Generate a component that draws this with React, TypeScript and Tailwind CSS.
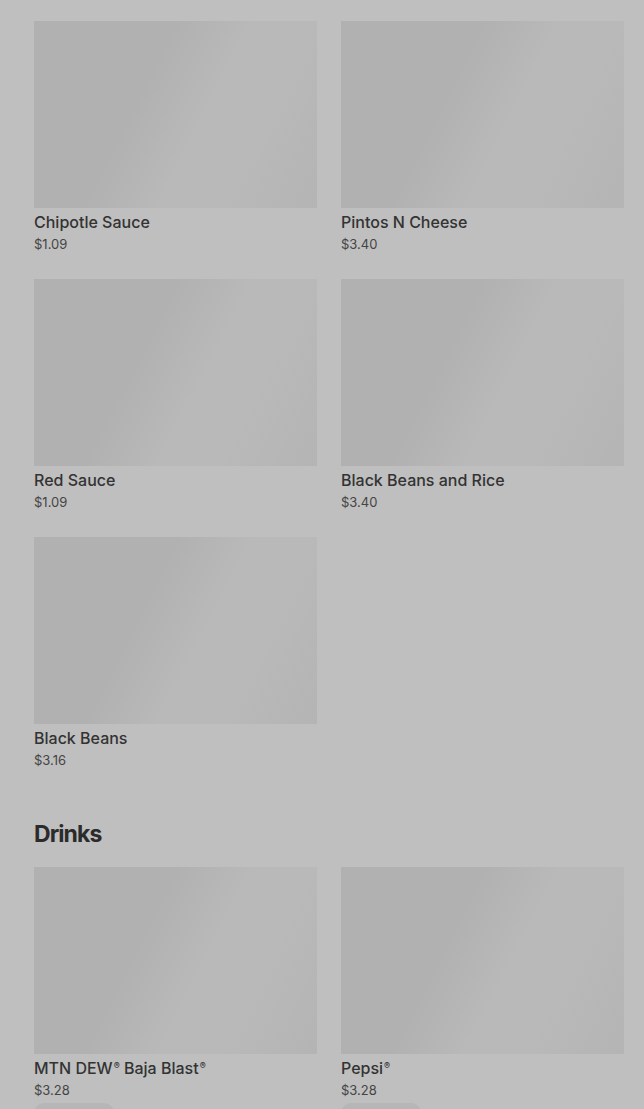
const sides = [
  { name: 'Chipotle Sauce', price: '$1.09' },
  { name: 'Pintos N Cheese', price: '$3.40' },
  { name: 'Red Sauce', price: '$1.09' },
  { name: 'Black Beans and Rice', price: '$3.40' },
  { name: 'Black Beans', price: '$3.16' },
];

const drinks = [
  { name: 'MTN DEW', extra: ' Baja Blast', reg2: true, price: '$3.28' },
  { name: 'Pepsi', extra: '', reg2: false, price: '$3.28' },
];

function Shimmer() {
  return (
    <div className="w-full h-[187px] bg-[linear-gradient(117deg,#b1b1b1_0%,#b1b1b1_38%,#b9b9b9_58%,#b9b9b9_74%,#b4b4b4_100%)]" />
  );
}

function Reg() {
  return <span className="text-[9px] leading-none align-[5px] ml-[1px]">®</span>;
}

export default function App() {
  return (
    <div className="min-h-[1109px] bg-[#bfbfbf] pl-[34px] pr-[20px] pt-[21px] overflow-hidden font-['Inter',sans-serif]">
      <div className="grid grid-cols-2 gap-x-6 gap-y-[23px]">
        {sides.map((item) => (
          <div key={item.name}>
            <Shimmer />
            <div className="mt-1 text-[16px] leading-5 font-medium text-[#333333]">{item.name}</div>
            <div className="text-[13px] leading-6 text-[#454545]">{item.price}</div>
          </div>
        ))}
      </div>

      <h2 className="mt-[46px] text-[23px] leading-8 font-bold tracking-[-0.04em] text-[#2b2b2b]">Drinks</h2>

      <div className="mt-[17px] grid grid-cols-2 gap-x-6">
        {drinks.map((item) => (
          <div key={item.name}>
            <Shimmer />
            <div className="mt-1 text-[16px] leading-5 font-medium text-[#333333]">
              {item.name}
              <Reg />
              {item.extra}
              {item.reg2 && <Reg />}
            </div>
            <div className="text-[13px] leading-6 text-[#454545]">{item.price}</div>
            <div className="mt-[1px] h-5 w-[80px] rounded-full bg-[#b6b6b6]" />
          </div>
        ))}
      </div>
    </div>
  );
}
